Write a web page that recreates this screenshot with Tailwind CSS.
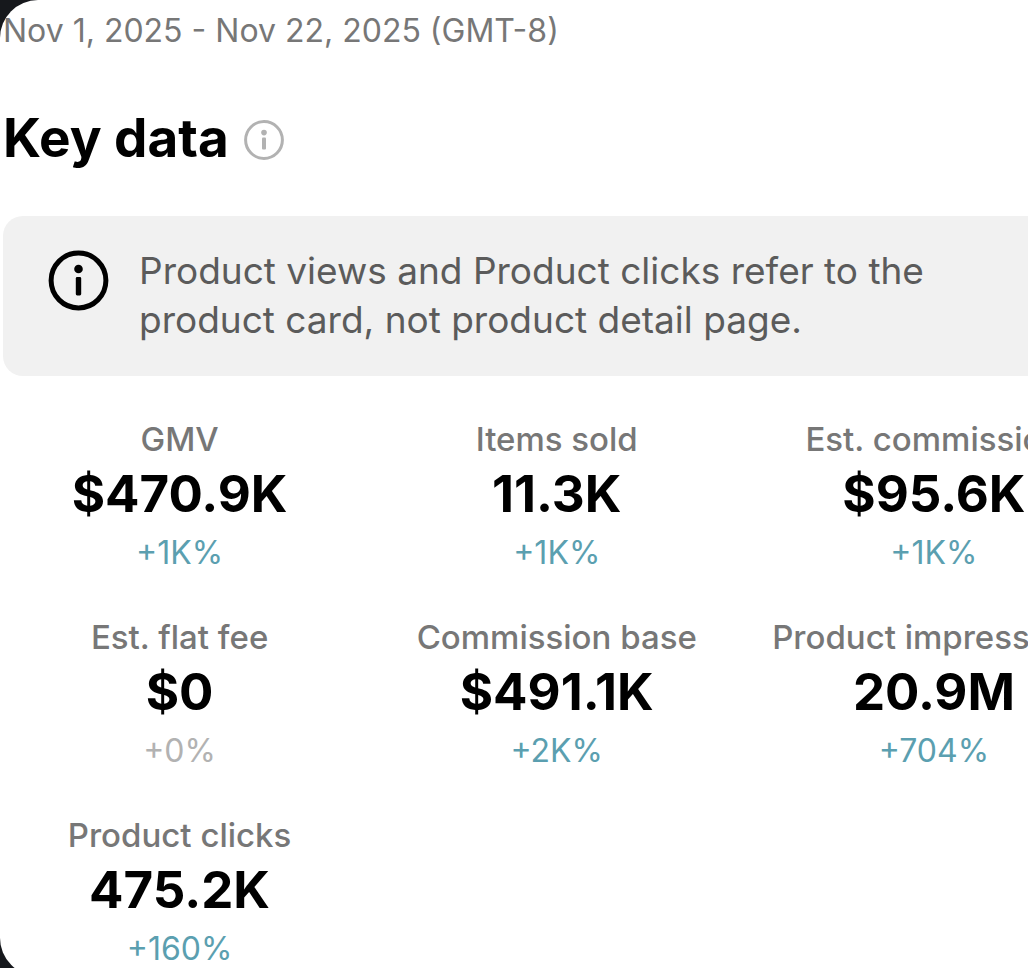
<!DOCTYPE html>
<html lang="en">

<head>
 <meta charset="UTF-8">
 <meta name="viewport" content="width=device-width, initial-scale=1.0">
 <title>Key data</title>
 <script src="https://cdn.jsdelivr.net/npm/@tailwindcss/browser@4"></script>
</head>

<body class="bg-[#16181c] h-screen overflow-hidden font-['Inter','Liberation_Sans',sans-serif]">
 <main class="min-h-screen bg-white rounded-l-[38px] overflow-hidden pt-2 pl-[3px]">
  <p class="text-[32px] leading-[46px] text-[#777777] whitespace-nowrap">Nov 1, 2025 - Nov 22, 2025 (GMT-8)</p>

  <div class="mt-[54px] flex items-center gap-[15px]">
   <h1 class="text-[53px] leading-[60px] font-bold text-black">Key data</h1>
   <button type="button" aria-label="About key data" class="mt-1 text-[#b2b2b2]">
    <svg class="size-10" viewBox="0 0 40 40" fill="none">
     <circle cx="20" cy="20" r="18.4" stroke="currentColor" stroke-width="3" />
     <circle cx="20" cy="12.6" r="2.8" fill="currentColor" />
     <rect x="18" y="17.6" width="4" height="12" rx="1" fill="currentColor" />
    </svg>
   </button>
  </div>

  <div class="mt-12 flex items-start gap-[30px] rounded-l-[20px] bg-[#f1f1f1] pl-[45px] pt-[30px] pb-8">
   <svg class="mt-1 size-[61px] shrink-0 text-black" viewBox="0 0 61 61" fill="none">
    <circle cx="30.5" cy="30.5" r="27.4" stroke="currentColor" stroke-width="5" />
    <circle cx="30.5" cy="19" r="4.3" fill="currentColor" />
    <rect x="27.8" y="27" width="5.4" height="18.4" rx="1.4" fill="currentColor" />
   </svg>
   <p class="max-w-[820px] text-[37px] leading-[49px] text-[#5b5b5b]">Product views and Product clicks refer to the product card, not product detail page.</p>
  </div>

  <dl class="mt-10 -ml-3 w-[calc(110%+4px)] grid grid-cols-3 gap-y-[34px] text-center whitespace-nowrap">
   <div>
    <dt class="text-[33px] leading-[46px] font-medium text-[#777777]">GMV</dt>
    <dd class="text-[51px] leading-[64px] font-bold text-black">$470.9K</dd>
    <dd class="text-[32px] leading-[54px] text-[#5b9fb0]">+1K%</dd>
   </div>
   <div>
    <dt class="text-[33px] leading-[46px] font-medium text-[#777777]">Items sold</dt>
    <dd class="text-[51px] leading-[64px] font-bold text-black">11.3K</dd>
    <dd class="text-[32px] leading-[54px] text-[#5b9fb0]">+1K%</dd>
   </div>
   <div>
    <dt class="text-[33px] leading-[46px] font-medium text-[#777777]">Est. commission</dt>
    <dd class="text-[51px] leading-[64px] font-bold text-black">$95.6K</dd>
    <dd class="text-[32px] leading-[54px] text-[#5b9fb0]">+1K%</dd>
   </div>
   <div>
    <dt class="text-[33px] leading-[46px] font-medium text-[#777777]">Est. flat fee</dt>
    <dd class="text-[51px] leading-[64px] font-bold text-black">$0</dd>
    <dd class="text-[32px] leading-[54px] text-[#b2b2b2]">+0%</dd>
   </div>
   <div>
    <dt class="text-[33px] leading-[46px] font-medium text-[#777777]">Commission base</dt>
    <dd class="text-[51px] leading-[64px] font-bold text-black">$491.1K</dd>
    <dd class="text-[32px] leading-[54px] text-[#5b9fb0]">+2K%</dd>
   </div>
   <div>
    <dt class="text-[33px] leading-[46px] font-medium text-[#777777]">Product impressions</dt>
    <dd class="text-[51px] leading-[64px] font-bold text-black">20.9M</dd>
    <dd class="text-[32px] leading-[54px] text-[#5b9fb0]">+704%</dd>
   </div>
   <div>
    <dt class="text-[33px] leading-[46px] font-medium text-[#777777]">Product clicks</dt>
    <dd class="text-[51px] leading-[64px] font-bold text-black">475.2K</dd>
    <dd class="text-[32px] leading-[54px] text-[#5b9fb0]">+160%</dd>
   </div>
  </dl>
 </main>
</body>

</html>
